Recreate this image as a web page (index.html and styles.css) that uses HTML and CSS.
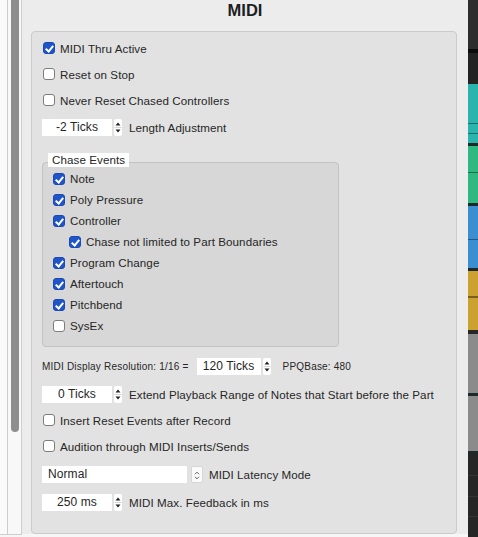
FILE: index.html
```html
<!DOCTYPE html>
<html lang="en">
<head>
  <meta charset="UTF-8">
  <meta name="viewport" content="width=device-width, initial-scale=1.0">
  <title>MIDI Preferences</title>
  <link rel="stylesheet" href="styles.css">
</head>
<body>

  <!-- left scroll gutter -->
  <div class="gutter">
    <div class="gutter-edge"></div>
    <div class="track"><div class="thumb"></div></div>
  </div>

  <div class="panel">
    <h2 class="title">MIDI</h2>

    <div class="group">
      <label class="row check-row"><input type="checkbox" checked> MIDI Thru Active</label>
      <label class="row check-row"><input type="checkbox"> Reset on Stop</label>
      <label class="row check-row"><input type="checkbox"> Never Reset Chased Controllers</label>

      <div class="row spin-row">
        <span class="spin-box">-2 Ticks</span>
        <span class="stepper">
          <svg width="8" height="17" viewBox="0 0 8 17"><path d="M4 3.5L6.5 6.5H1.5Z" fill="#222"/><path d="M0.5 8.5H7.5" stroke="#d4d4d4"/><path d="M4 13.5L6.5 10.5H1.5Z" fill="#222"/></svg>
        </span>
        <span class="spin-label">Length Adjustment</span>
      </div>

      <div class="chase">
        <span class="chase-title">Chase Events</span>
        <div class="chase-box">
          <label class="item"><input type="checkbox" checked> Note</label>
          <label class="item"><input type="checkbox" checked> Poly Pressure</label>
          <label class="item"><input type="checkbox" checked> Controller</label>
          <label class="item sub"><input type="checkbox" checked> Chase not limited to Part Boundaries</label>
          <label class="item"><input type="checkbox" checked> Program Change</label>
          <label class="item"><input type="checkbox" checked> Aftertouch</label>
          <label class="item"><input type="checkbox" checked> Pitchbend</label>
          <label class="item"><input type="checkbox"> SysEx</label>
        </div>
      </div>

      <div class="row res-row">
        <span class="small">MIDI Display Resolution: 1/16 =</span>
        <span class="spin-box res-box">120 Ticks</span>
        <span class="stepper">
          <svg width="8" height="17" viewBox="0 0 8 17"><path d="M4 3.5L6.5 6.5H1.5Z" fill="#222"/><path d="M0.5 8.5H7.5" stroke="#d4d4d4"/><path d="M4 13.5L6.5 10.5H1.5Z" fill="#222"/></svg>
        </span>
        <span class="small ppq">PPQBase: 480</span>
      </div>

      <div class="row spin-row extend-row">
        <span class="spin-box">0 Ticks</span>
        <span class="stepper">
          <svg width="8" height="17" viewBox="0 0 8 17"><path d="M4 3.5L6.5 6.5H1.5Z" fill="#222"/><path d="M0.5 8.5H7.5" stroke="#d4d4d4"/><path d="M4 13.5L6.5 10.5H1.5Z" fill="#222"/></svg>
        </span>
        <span class="spin-label">Extend Playback Range of Notes that Start before the Part</span>
      </div>

      <label class="row check-row"><input type="checkbox"> Insert Reset Events after Record</label>
      <label class="row check-row"><input type="checkbox"> Audition through MIDI Inserts/Sends</label>

      <div class="row select-row">
        <span class="select-box">Normal</span>
        <span class="select-arrows">
          <svg width="12" height="17" viewBox="0 0 12 17"><path d="M3.5 7L6 4.5L8.5 7" stroke="#444" fill="none"/><path d="M3.5 10L6 12.5L8.5 10" stroke="#444" fill="none"/></svg>
        </span>
        <span class="select-label">MIDI Latency Mode</span>
      </div>

      <div class="row spin-row feedback-row">
        <span class="spin-box">250 ms</span>
        <span class="stepper">
          <svg width="8" height="17" viewBox="0 0 8 17"><path d="M4 3.5L6.5 6.5H1.5Z" fill="#222"/><path d="M0.5 8.5H7.5" stroke="#d4d4d4"/><path d="M4 13.5L6.5 10.5H1.5Z" fill="#222"/></svg>
        </span>
        <span class="spin-label">MIDI Max. Feedback in ms</span>
      </div>
    </div>
  </div>

  <!-- track colour lanes of the project window behind -->
  <div class="lanes">
    <div class="lane top"></div>
    <div class="lane black"></div>
    <div class="lane dark"></div>
    <div class="lane teal"></div>
    <div class="lane sep"></div>
    <div class="lane green"></div>
    <div class="lane sep"></div>
    <div class="lane blue"></div>
    <div class="lane sep"></div>
    <div class="lane yellow"></div>
    <div class="lane sep wide"></div>
    <div class="lane gray"></div>
    <div class="lane sep"></div>
    <div class="lane gray short"></div>
    <div class="lane sep"></div>
    <div class="lane bottom"></div>
  </div>

</body>
</html>
```

FILE: styles.css
```css
body {
  font-family: "Liberation Sans", Arial, sans-serif;
  font-size: 11.6px;
  letter-spacing: 0.08px;
  color: #262626;
  background-color: #f6f6f6;
  display: flex;
  width: 478px;
  height: 537px;
  margin: 0;
  overflow: hidden;
}

/* scroll gutter */
.gutter {
  display: flex;
  height: 534px;
  border-bottom: 1px solid #cfcfcf;
}

.gutter-edge {
  width: 7px;
  background-color: #fafafa;
  border-right: 1px solid #cdcdcd;
}

.track {
  width: 10px;
  padding-left: 3px;
  background-color: #f8f8f8;
  border-right: 1px solid #cfcfcf;
}

.thumb {
  width: 8px;
  height: 432px;
  background-color: #8e8e8e;
  border-radius: 0 0 4px 4px;
}

/* preference panel */
.panel {
  width: 446px;
  height: 534px;
  background-color: #ececec;
}

.title {
  margin: 0;
  height: 31px;
  line-height: 20px;
  font-size: 16.5px;
  font-weight: bold;
  letter-spacing: 0;
  text-align: center;
  color: #1e1e1e;
}

.group {
  box-sizing: border-box;
  height: 503px;
  margin: 0 11px 0 9px;
  padding: 3px 10px 0 10px;
  background-color: #e2e2e2;
  border: 1px solid #cbcbcb;
  border-radius: 4px;
}

.row {
  display: flex;
  align-items: center;
  height: 26px;
}

.check-row {
  padding-left: 1px;
  gap: 5px;
}

input[type="checkbox"] {
  appearance: none;
  -webkit-appearance: none;
  box-sizing: border-box;
  width: 12px;
  height: 12px;
  margin: 0;
  flex-shrink: 0;
  background-color: #fff;
  border: 1px solid #7d7d7d;
  border-radius: 3px;
  position: relative;
}

input[type="checkbox"]:checked {
  background-color: #1f55c8;
  border-color: #1a49b0;
}

input[type="checkbox"]:checked::after {
  content: "";
  position: absolute;
  left: 3px;
  top: 1px;
  width: 3px;
  height: 6px;
  border-right: 2px solid #fff;
  border-bottom: 2px solid #fff;
  transform: rotate(40deg);
}

/* number fields with steppers */
.spin-row {
  height: 28px;
}

.spin-box {
  box-sizing: border-box;
  width: 70px;
  height: 17px;
  line-height: 17px;
  text-align: center;
  background-color: #fff;
  font-size: 12px;
}

.stepper {
  display: flex;
  width: 8px;
  height: 17px;
  margin-left: 2px;
  background-color: #fff;
  border-radius: 2px;
}

.spin-label {
  margin-left: 7px;
}

/* chase events group */
.chase {
  margin-top: 12px;
}

.chase-title {
  position: relative;
  z-index: 1;
  display: inline-block;
  height: 14px;
  line-height: 14px;
  margin-left: 6px;
  padding: 0 4px;
  background-color: #fff;
}

.chase-box {
  box-sizing: border-box;
  width: 297px;
  height: 185px;
  margin-top: -5px;
  padding: 5px 0 0 10px;
  background-color: #d7d7d7;
  border: 1px solid #c3c3c3;
  border-radius: 4px;
}

.item {
  display: flex;
  align-items: center;
  gap: 5px;
  height: 21px;
}

.item.sub {
  padding-left: 16px;
}

/* resolution line */
.res-row {
  margin-top: 6px;
}

.small {
  font-size: 10px;
  letter-spacing: 0.2px;
}

.res-box {
  width: 64px;
  margin-left: 8px;
}

.ppq {
  margin-left: 12px;
}

.extend-row {
  margin-top: 2px;
  height: 26px;
}

/* latency popup */
.select-row {
  margin-top: 2px;
}

.select-box {
  box-sizing: border-box;
  width: 145px;
  height: 17px;
  line-height: 17px;
  padding-left: 6px;
  background-color: #fff;
  font-size: 12px;
}

.select-arrows {
  display: flex;
  width: 12px;
  height: 17px;
  margin-left: 4px;
  background-color: #fafafa;
  border: 1px solid #d6d6d6;
  box-sizing: border-box;
  border-radius: 2px;
}

.select-label {
  margin-left: 6px;
}

.feedback-row {
  margin-top: 1px;
}

/* colour lanes on the right */
.lanes {
  width: 10px;
  display: flex;
  flex-direction: column;
}

.lane {
  flex-shrink: 0;
}

.lane.top {
  height: 49px;
  background-color: #2d2d2d;
}

.lane.black {
  height: 4px;
  background-color: #0c0c0c;
}

.lane.dark {
  height: 31px;
  background-color: #232323;
}

.lane.sep {
  height: 3px;
  background-color: #1d2a2a;
}

.lane.sep.wide {
  height: 4px;
  background-color: #262626;
}

.lane.teal {
  height: 59px;
  background: linear-gradient(#2bb3ad 0 39px, #17706c 39px 40px, #2bb3ad 40px 49px, #17706c 49px 50px, #2bb3ad 50px);
}

.lane.green {
  height: 57px;
  background: linear-gradient(#2fb882 0 26px, #1b6e4e 26px 27px, #2fb882 27px);
}

.lane.blue {
  height: 62px;
  background: linear-gradient(#3b8fd0 0 33px, #1f5a86 33px 34px, #3b8fd0 34px);
}

.lane.yellow {
  height: 59px;
  background: linear-gradient(#cba12f 0 25px, #7a5e1a 25px 27px, #cba12f 27px);
}

.lane.gray {
  height: 59px;
  background-color: #8b8b8b;
}

.lane.gray.short {
  height: 55px;
}

.lane.bottom {
  height: 84px;
  background: linear-gradient(#262626 0 21px, #343434 21px 22px, #262626 22px 42px, #343434 42px 43px, #262626 43px 62px, #343434 62px 63px, #262626 63px);
}
```
